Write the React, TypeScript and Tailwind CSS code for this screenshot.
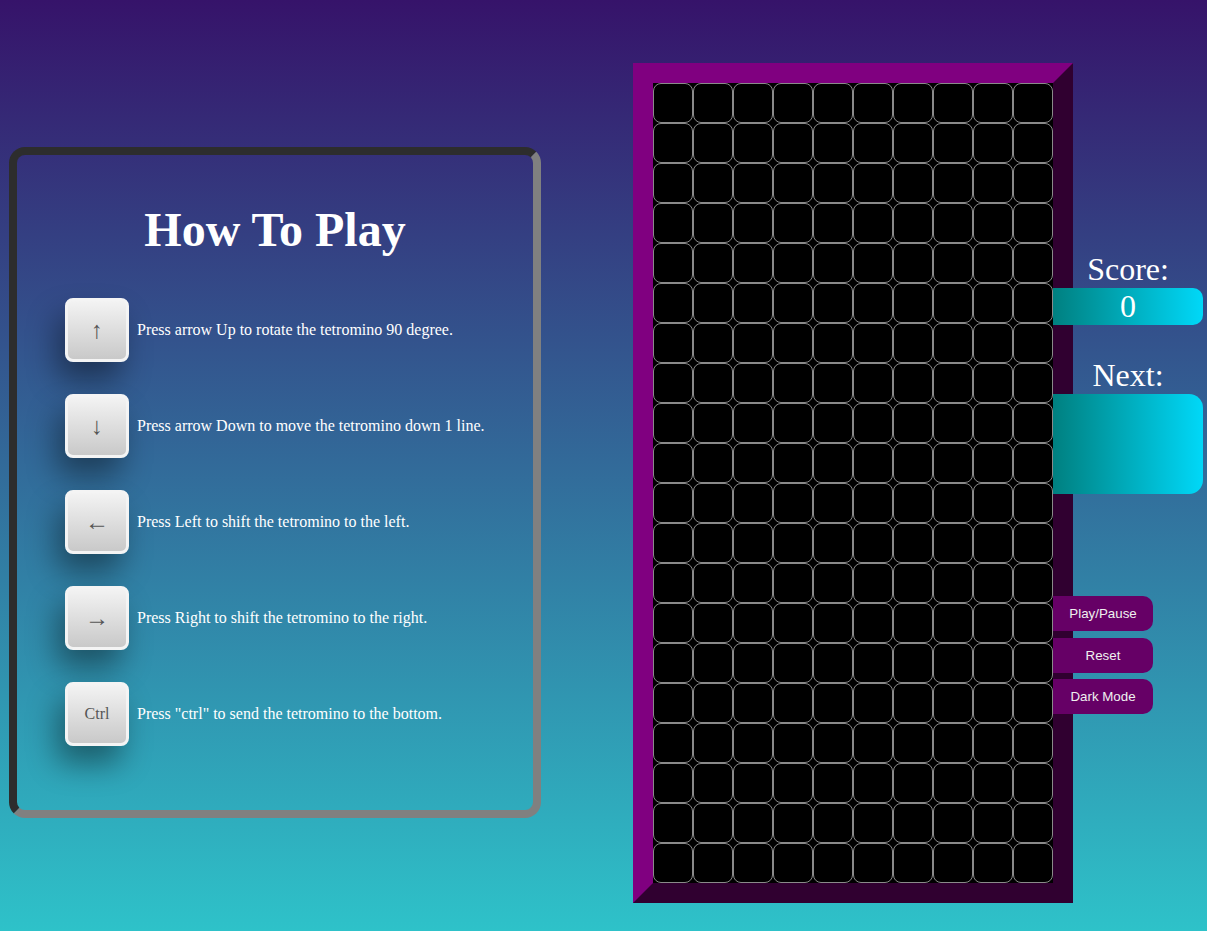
const keys = [
  { label: "↑", text: "Press arrow Up to rotate the tetromino 90 degree." },
  { label: "↓", text: "Press arrow Down to move the tetromino down 1 line." },
  { label: "←", text: "Press Left to shift the tetromino to the left." },
  { label: "→", text: "Press Right to shift the tetromino to the right." },
  { label: "Ctrl", text: 'Press "ctrl" to send the tetromino to the bottom.' },
];

const cells = Array.from({ length: 200 }, (_, i) => i);

export default function App() {
  return (
    <div className="flex h-[931px] w-full items-start overflow-hidden bg-[linear-gradient(180deg,#36136a,#2ec2c9)] font-['Liberation_Serif',serif]">
      <HowToPlay />

      <div className="ml-[92px] mt-[63px] shrink-0 border-[20px] border-t-[#800080] border-l-[#800080] border-r-[#300030] border-b-[#300030]">
        <div className="grid w-[400px] grid-cols-10 bg-black">
          {cells.map((cell) => (
            <div key={cell} className="h-10 w-10 rounded-lg border border-[#8a8a8a] bg-black" />
          ))}
        </div>
      </div>

      <SidePanel />
    </div>
  );
}

function HowToPlay() {
  return (
    <section className="ml-[9px] mt-[147px] w-[532px] shrink-0 rounded-2xl border-8 border-t-[#2d2d2d] border-l-[#2d2d2d] border-r-[#808080] border-b-[#808080] pb-[64px] pl-[48px]">
      <h1 className="mt-[47px] -ml-[48px] text-center text-[48px] font-bold leading-[55px] text-white">How To Play</h1>
      <div className="mt-[41px] flex flex-col gap-8">
        {keys.map((key) => (
          <div key={key.label} className="flex items-center gap-2">
            <div
              className={`flex h-16 w-16 shrink-0 items-center justify-center rounded-lg border-[3px] border-[#f4f4f4] bg-[linear-gradient(180deg,#f3f3f3,#c9c9c9)] text-[#555] shadow-[-8px_18px_30px_rgba(0,0,0,0.4)] ${
                key.label === "Ctrl" ? "text-[16px]" : "text-[24px]"
              }`}
            >
              {key.label}
            </div>
            <p className="text-[16px] text-white">{key.text}</p>
          </div>
        ))}
      </div>
    </section>
  );
}

function SidePanel() {
  return (
    <div className="-ml-[20px] mt-[251px] flex w-[150px] shrink-0 flex-col text-white">
      <div className="h-[37px] text-center text-[32px] leading-[37px]">Score:</div>
      <div className="h-[37px] rounded-r-[10px] bg-[linear-gradient(90deg,#008080,#00d8f8)] text-center text-[32px] leading-[37px]">
        0
      </div>
      <div className="mt-[32px] h-[37px] text-center text-[32px] leading-[37px]">Next:</div>
      <div className="h-[100px] rounded-r-[14px] bg-[linear-gradient(90deg,#008080,#00d8f8)]" />

      <div className="mt-[102px] flex w-[100px] flex-col font-['Liberation_Sans',sans-serif] text-[13.33px]">
        <button type="button" className="h-[35px] rounded-r-[10px] bg-[#660066] text-[#f0f0f0]">
          Play/Pause
        </button>
        <button type="button" className="mt-[7px] h-[35px] rounded-r-[10px] bg-[#660066] text-[#f0f0f0]">
          Reset
        </button>
        <button type="button" className="mt-[6px] h-[35px] rounded-r-[10px] bg-[#660066] text-[#f0f0f0]">
          Dark Mode
        </button>
      </div>
    </div>
  );
}
